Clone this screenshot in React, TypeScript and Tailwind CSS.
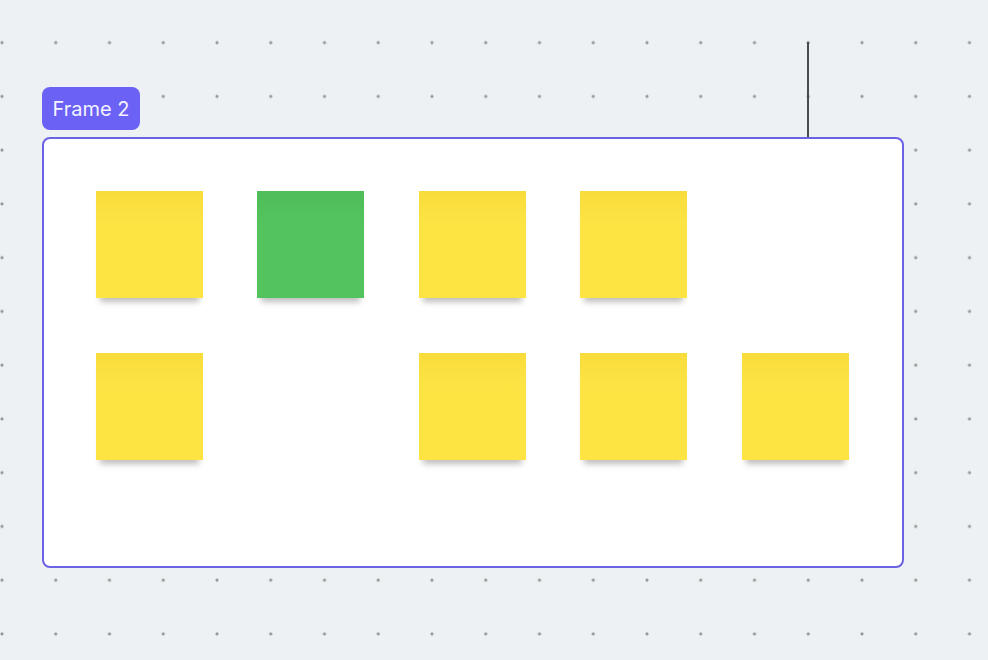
import React from 'react';

type Note = 'yellow' | 'green' | null;

const notes: Note[] = [
  'yellow', 'green', 'yellow', 'yellow', null,
  'yellow', null, 'yellow', 'yellow', 'yellow',
];

function Sticky({ color }: { color: Note }) {
  if (!color) return <div className="w-[107px] h-[107px]" />;
  return (
    <div
      className={
        color === 'green'
          ? 'w-[107px] h-[107px] bg-gradient-to-b from-[#4fbd59] via-[#53c45d] via-30% to-[#53c45d] shadow-[0_8px_6px_-4px_rgba(0,0,0,0.26)]'
          : 'w-[107px] h-[107px] bg-gradient-to-b from-[#f8dc3c] via-[#fde443] via-30% to-[#fde443] shadow-[0_8px_6px_-4px_rgba(0,0,0,0.26)]'
      }
    />
  );
}

export default function App() {
  return (
    <div
      className="relative w-[988px] h-[660px] overflow-hidden bg-[#eef1f3] bg-[radial-gradient(circle,#959595_1.3px,transparent_1.8px)] bg-[size:53.75px_53.75px] bg-[position:-24.9px_15.8px]"
      style={{ fontFamily: 'Inter, "Noto Sans", sans-serif' }}
    >
      {/* connector line */}
      <div className="absolute left-[807px] top-[42px] w-[2px] h-[96px] bg-[#4a4a4a]" />

      {/* frame */}
      <div className="absolute left-[42px] top-[87px] flex flex-col gap-[7px]">
        <div className="self-start h-[43px] w-[98px] flex items-center justify-center rounded-[8px] bg-[#6b61f4] text-[#f3f2ff] text-[20px]">
          Frame 2
        </div>
        <div className="w-[862px] h-[431px] bg-white border-[2.5px] border-[#6b62e6] rounded-[8px] pl-[51.5px] pt-[51.5px]">
          <div className="grid grid-cols-[repeat(5,107px)] gap-x-[54.5px] gap-y-[55px]">
            {notes.map((n, i) => (
              <Sticky key={i} color={n} />
            ))}
          </div>
        </div>
      </div>
    </div>
  );
}
